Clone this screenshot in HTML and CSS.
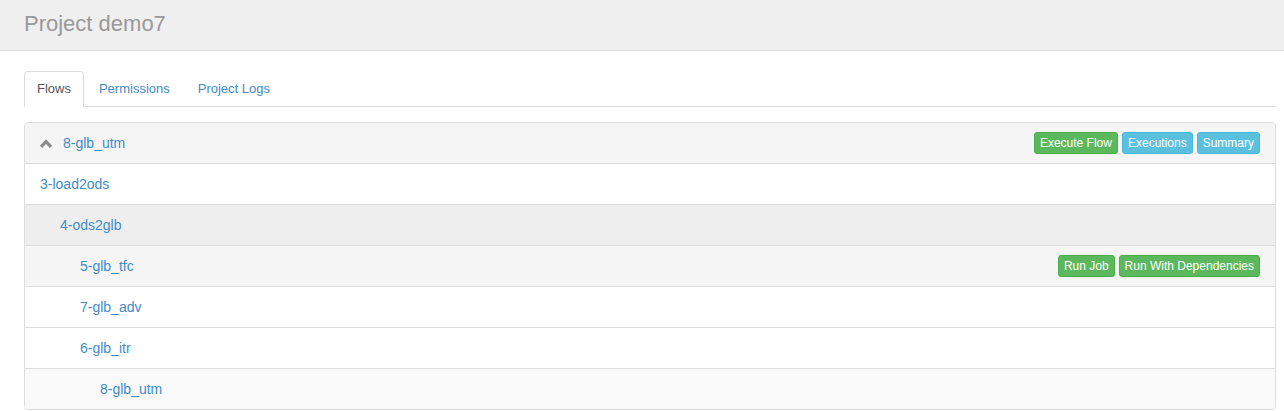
FILE: index.html
```html
<!DOCTYPE html>
<html>
<head>
<meta charset="utf-8">
<link rel="stylesheet" href="styles.css">
</head>
<body>
<div class="page-header">
  <h1 class="title">Project demo7</h1>
</div>
<div class="content">
  <ul class="nav-tabs">
    <li class="tab active">Flows</li>
    <li class="tab">Permissions</li>
    <li class="tab">Project Logs</li>
  </ul>
  <div class="panel">
    <div class="row row-head">
      <svg class="chev" width="12" height="9" viewBox="0 0 12 9"><path d="M1 7.8 L6 2.6 L11 7.8" fill="none" stroke="#8c8c8c" stroke-width="3.2"/></svg>
      <a class="link">8-glb_utm</a>
      <div class="btns">
        <span class="btn btn-success">Execute Flow</span>
        <span class="btn btn-info">Executions</span>
        <span class="btn btn-info">Summary</span>
      </div>
    </div>
    <div class="row lvl0 bg-white"><a class="link">3-load2ods</a></div>
    <div class="row lvl1 bg-dark"><a class="link">4-ods2glb</a></div>
    <div class="row lvl2 bg-mid"><a class="link">5-glb_tfc</a>
      <div class="btns">
        <span class="btn btn-success">Run Job</span>
        <span class="btn btn-success">Run With Dependencies</span>
      </div>
    </div>
    <div class="row lvl2 bg-white"><a class="link">7-glb_adv</a></div>
    <div class="row lvl2 bg-white"><a class="link">6-glb_itr</a></div>
    <div class="row lvl3 bg-light last"><a class="link">8-glb_utm</a></div>
  </div>
</div>
</body>
</html>
```
FILE: styles.css
```css
* { box-sizing: border-box; }
body {
  margin: 0;
  font-family: "Liberation Sans", Arial, sans-serif;
  font-size: 14px;
  color: #333;
  background: #fff;
}
.page-header {
  height: 51px;
  background: #efefef;
  border-bottom: 1px solid #dddddd;
  padding-left: 24px;
  display: flex;
  align-items: center;
}
.title {
  margin: 0;
  font-size: 22px;
  font-weight: normal;
  color: #999;
  padding-bottom: 2px;
}
.content {
  padding: 20px 8px 0 24px;
}
.nav-tabs {
  list-style: none;
  margin: 0;
  padding: 0;
  display: flex;
  border-bottom: 1px solid #ddd;
  height: 36px;
}
.tab {
  font-size: 13px;
  color: #428bca;
  padding: 0 12px;
  height: 36px;
  line-height: 34px;
  border: 1px solid transparent;
  border-radius: 4px 4px 0 0;
  margin-right: 2px;
}
.tab.active {
  color: #555;
  background: #fff;
  border-color: #ddd;
  border-bottom-color: #fff;
}
.panel {
  margin-top: 15px;
  border: 1px solid #ddd;
  border-radius: 4px;
  overflow: hidden;
  box-shadow: 0 1px 1px rgba(0,0,0,0.05);
}
.row {
  height: 41px;
  border-bottom: 1px solid #ddd;
  display: flex;
  align-items: center;
  padding-left: 15px;
  padding-right: 15px;
}
.row.last { height: 40px; border-bottom: none; }
.row-head { background: #f5f5f5; }
.chev { margin-right: 11px; margin-top: 1px; }
.link { color: #428bca; text-decoration: none; }
.lvl1 { padding-left: 35px; }
.lvl2 { padding-left: 55px; }
.lvl3 { padding-left: 75px; }
.bg-white { background: #fff; }
.bg-dark { background: #eeeeee; }
.bg-mid { background: #f5f5f5; }
.bg-light { background: #f9f9f9; }
.btns {
  margin-left: auto;
  display: flex;
  gap: 4px;
}
.btn {
  display: inline-block;
  font-size: 12px;
  line-height: 18px;
  padding: 1px 5px;
  border: 1px solid transparent;
  border-radius: 3px;
  color: #fff;
}
.btn-success { background: #5cb85c; border-color: #4cae4c; }
.btn-info { background: #5bc0de; border-color: #46b8da; }
```
